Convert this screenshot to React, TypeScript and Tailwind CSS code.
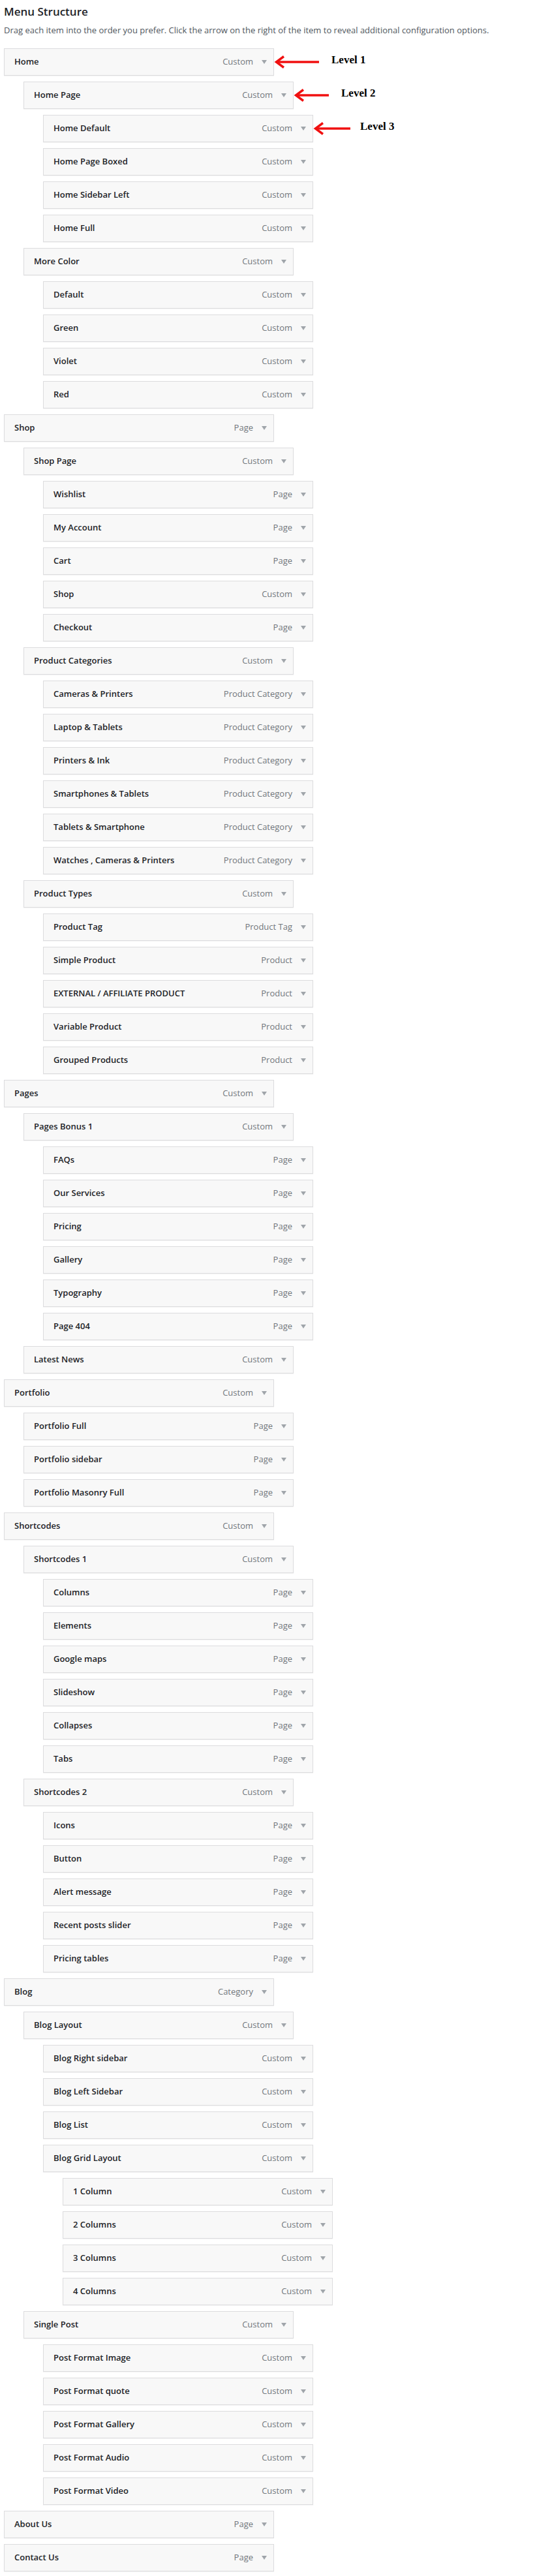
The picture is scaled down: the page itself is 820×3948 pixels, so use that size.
import React from 'react';

type Item = { label: string; type: string; level: number; note?: string };

const rows: [string, string, number, string?][] = [
  ['Home', 'Custom', 0, 'Level 1'],
  ['Home Page', 'Custom', 1, 'Level 2'],
  ['Home Default', 'Custom', 2, 'Level 3'],
  ['Home Page Boxed', 'Custom', 2],
  ['Home Sidebar Left', 'Custom', 2],
  ['Home Full', 'Custom', 2],
  ['More Color', 'Custom', 1],
  ['Default', 'Custom', 2],
  ['Green', 'Custom', 2],
  ['Violet', 'Custom', 2],
  ['Red', 'Custom', 2],
  ['Shop', 'Page', 0],
  ['Shop Page', 'Custom', 1],
  ['Wishlist', 'Page', 2],
  ['My Account', 'Page', 2],
  ['Cart', 'Page', 2],
  ['Shop', 'Custom', 2],
  ['Checkout', 'Page', 2],
  ['Product Categories', 'Custom', 1],
  ['Cameras & Printers', 'Product Category', 2],
  ['Laptop & Tablets', 'Product Category', 2],
  ['Printers & Ink', 'Product Category', 2],
  ['Smartphones & Tablets', 'Product Category', 2],
  ['Tablets & Smartphone', 'Product Category', 2],
  ['Watches , Cameras & Printers', 'Product Category', 2],
  ['Product Types', 'Custom', 1],
  ['Product Tag', 'Product Tag', 2],
  ['Simple Product', 'Product', 2],
  ['EXTERNAL / AFFILIATE PRODUCT', 'Product', 2],
  ['Variable Product', 'Product', 2],
  ['Grouped Products', 'Product', 2],
  ['Pages', 'Custom', 0],
  ['Pages Bonus 1', 'Custom', 1],
  ['FAQs', 'Page', 2],
  ['Our Services', 'Page', 2],
  ['Pricing', 'Page', 2],
  ['Gallery', 'Page', 2],
  ['Typography', 'Page', 2],
  ['Page 404', 'Page', 2],
  ['Latest News', 'Custom', 1],
  ['Portfolio', 'Custom', 0],
  ['Portfolio Full', 'Page', 1],
  ['Portfolio sidebar', 'Page', 1],
  ['Portfolio Masonry Full', 'Page', 1],
  ['Shortcodes', 'Custom', 0],
  ['Shortcodes 1', 'Custom', 1],
  ['Columns', 'Page', 2],
  ['Elements', 'Page', 2],
  ['Google maps', 'Page', 2],
  ['Slideshow', 'Page', 2],
  ['Collapses', 'Page', 2],
  ['Tabs', 'Page', 2],
  ['Shortcodes 2', 'Custom', 1],
  ['Icons', 'Page', 2],
  ['Button', 'Page', 2],
  ['Alert message', 'Page', 2],
  ['Recent posts slider', 'Page', 2],
  ['Pricing tables', 'Page', 2],
  ['Blog', 'Category', 0],
  ['Blog Layout', 'Custom', 1],
  ['Blog Right sidebar', 'Custom', 2],
  ['Blog Left Sidebar', 'Custom', 2],
  ['Blog List', 'Custom', 2],
  ['Blog Grid Layout', 'Custom', 2],
  ['1 Column', 'Custom', 3],
  ['2 Columns', 'Custom', 3],
  ['3 Columns', 'Custom', 3],
  ['4 Columns', 'Custom', 3],
  ['Single Post', 'Custom', 1],
  ['Post Format Image', 'Custom', 2],
  ['Post Format quote', 'Custom', 2],
  ['Post Format Gallery', 'Custom', 2],
  ['Post Format Audio', 'Custom', 2],
  ['Post Format Video', 'Custom', 2],
  ['About Us', 'Page', 0],
  ['Contact Us', 'Page', 0],
];

const items: Item[] = rows.map(([label, type, level, note]) => ({ label, type, level, note }));

const indent = ['pl-0', 'pl-[30px]', 'pl-[60px]', 'pl-[90px]'];

// arrow length and gap before the label, per level
const notes: Record<string, { len: number; gap: string }> = {
  'Level 1': { len: 69, gap: 'ml-[19px]' },
  'Level 2': { len: 54, gap: 'ml-[19px]' },
  'Level 3': { len: 57, gap: 'ml-[15px]' },
};

function RedArrow({ len }: { len: number }) {
  return (
    <svg width={len} height="22" viewBox={`0 0 ${len} 22`} className="shrink-0">
      <line x1="3" y1="11" x2={len} y2="11" stroke="#f01010" strokeWidth="3.5" />
      <polyline points="15,2.5 3.5,11 15,19.5" fill="none" stroke="#f01010" strokeWidth="3.5" />
    </svg>
  );
}

function MenuRow({ item }: { item: Item }) {
  const note = item.note ? notes[item.note] : null;
  return (
    <div className={`flex items-center ${indent[item.level]}`}>
      <div className="w-[414px] h-[42px] shrink-0 flex items-center justify-between border border-[#dcdcde] bg-[#f8f8f8] pl-[15px] pr-[10px] shadow-[0_1px_1px_rgba(0,0,0,0.04)]">
        <span className="text-[13px] font-semibold text-[#1d2327]">{item.label}</span>
        <span className="flex items-center gap-[13px]">
          <span className="text-[13px] text-[#72777c]">{item.type}</span>
          <svg width="8" height="6" viewBox="0 0 8 6">
            <polygon points="0,0 8,0 4,6" fill="#a0a5aa" />
          </svg>
        </span>
      </div>
      {note && (
        <>
          <RedArrow len={note.len} />
          <span className={`${note.gap} -translate-y-[3px] text-[17px] font-bold text-black font-['Liberation_Serif',serif]`}>
            {item.note}
          </span>
        </>
      )}
    </div>
  );
}

export default function App() {
  return (
    <div className="bg-white px-[6px] pt-[6px] pb-[7px] font-['Open_Sans','Noto_Sans',sans-serif]">
      <h3 className="text-[17px] leading-[24px] font-semibold text-[#1d2327]">Menu Structure</h3>
      <p className="mt-[6px] text-[13px] leading-[20px] text-[#50575e]">
        Drag each item into the order you prefer. Click the arrow on the right of the item to reveal additional configuration options.
      </p>
      <div className="mt-[18px] flex flex-col gap-[9px]">
        {items.map((item, i) => (
          <MenuRow key={i} item={item} />
        ))}
      </div>
    </div>
  );
}
